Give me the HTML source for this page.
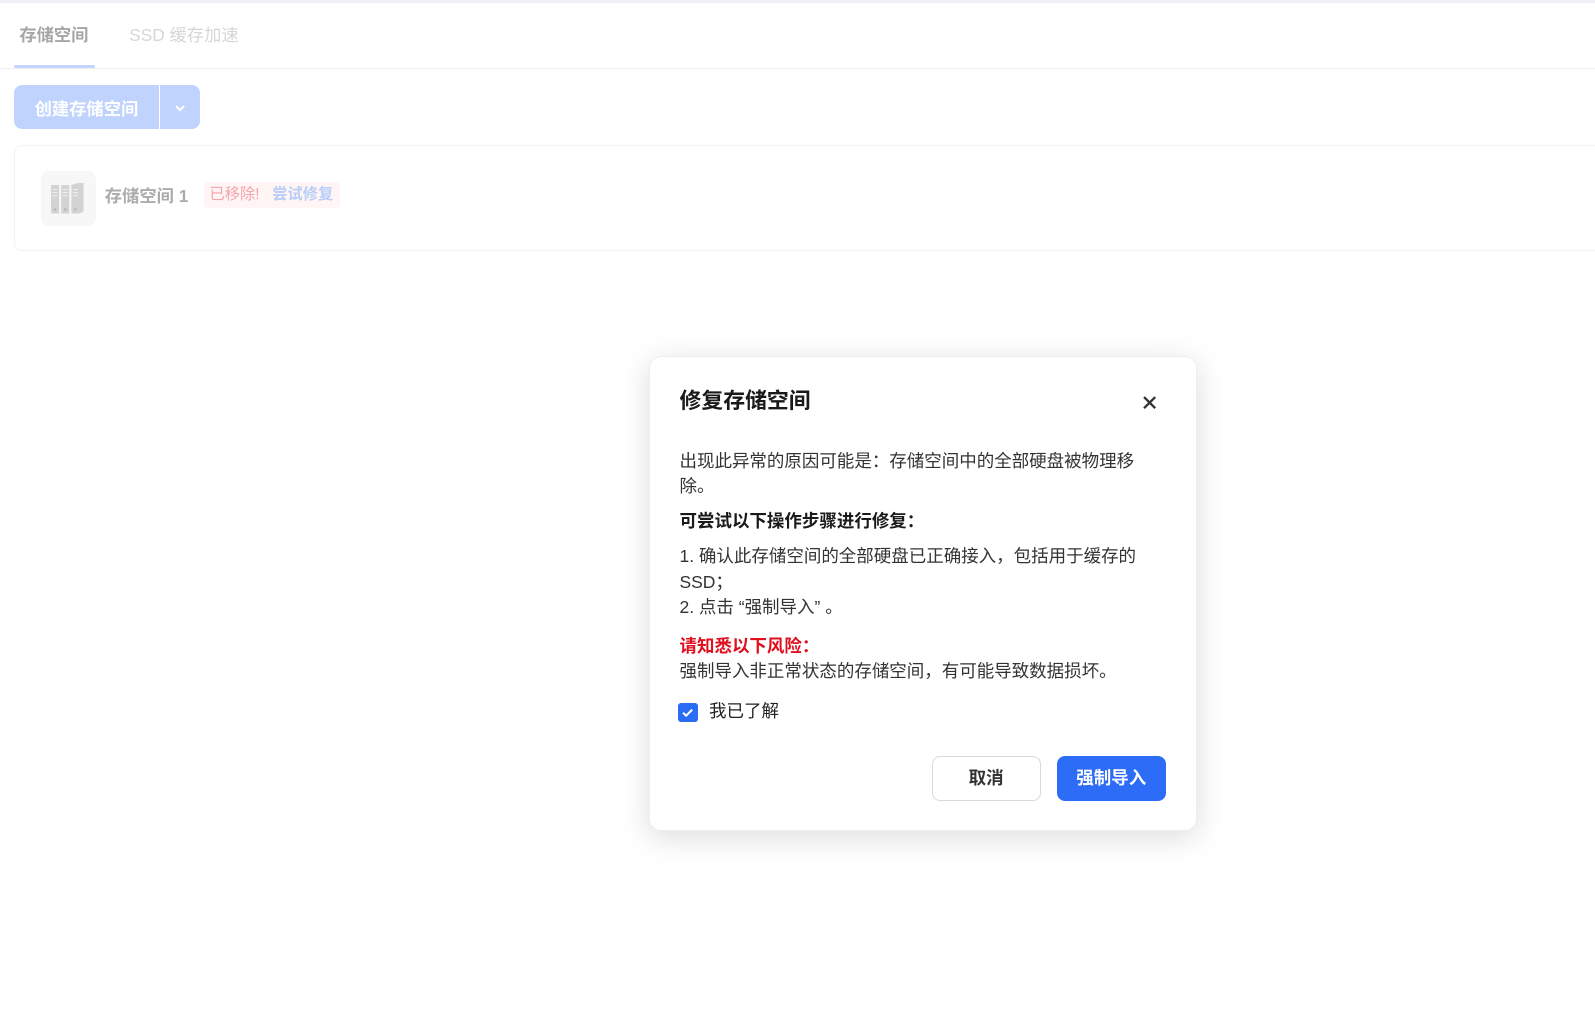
<!DOCTYPE html>
<html><head><meta charset="utf-8"><style>
*{box-sizing:border-box;margin:0;padding:0}
body{width:1595px;height:1015px;background:#fff;font-family:"Liberation Sans","Noto Sans CJK SC",sans-serif;position:relative;overflow:hidden}
#w{position:absolute;left:0;top:0;width:1568px;height:998px;zoom:1.0172}
.topbar{position:absolute;left:0;top:0;width:1568px;height:3px;background:#eef0f3}
.tabs{position:absolute;left:0;top:3px;width:1568px;height:65px;border-bottom:1px solid #eeeff1}
.tab1{position:absolute;left:19px;top:21px;font-size:17px;font-weight:bold;color:#a6a6a6}
.tab2{position:absolute;left:127px;top:21px;font-size:17px;color:#d6d6d6}
.ul{position:absolute;left:14px;top:64px;width:79px;height:3px;background:#c3d6fd;border-radius:2px}
.btn{position:absolute;left:14px;top:84px;width:183px;height:43px;background:#bfd3fd;border-radius:8px;color:#fff;font-weight:bold;font-size:17px}
.btn .t{position:absolute;left:20px;top:9px}
.btn .sep{position:absolute;left:142px;top:0;width:1px;height:43px;background:#fff}
.card{position:absolute;left:14px;top:143px;width:1580px;height:104px;border:1px solid #f3f3f3;border-radius:8px}
.ico{position:absolute;left:40px;top:168px;width:54px;height:54px;background:#f7f7f7;border-radius:8px}
.name{position:absolute;left:103px;top:179px;font-size:17px;font-weight:bold;color:#acacac}
.tag{position:absolute;left:201px;top:179px;height:25px;width:133px;background:#fff5f5;border-radius:4px;font-size:15px;line-height:25px;padding-left:5px}
.mask{position:absolute;left:638px;top:350px;width:539px;height:467px;background:#fff;border-radius:12px;box-shadow:0 6px 30px rgba(0,0,0,.14);border:1px solid #eee}
.m{position:absolute;left:668px;color:#333;font-size:17.2px;line-height:25px}
</style></head><body><div id="w">
<div class="topbar"></div>
<div class="tabs"></div>
<div class="tab1">存储空间</div><div class="tab2">SSD 缓存加速</div><div class="ul"></div>
<div class="btn"><span class="t">创建存储空间</span><span class="sep"></span>
<svg style="position:absolute;left:157px;top:17px" width="12" height="10" viewBox="0 0 12 10"><path d="M2 3l4 4 4-4" fill="none" stroke="#fff" stroke-width="2"/></svg></div>
<div class="card"></div>
<div class="ico"><svg style="position:absolute;left:9px;top:12px" width="36" height="32" viewBox="0 0 36 32"><g fill="#d3d3d3"><rect x="1" y="2" width="8" height="28"/><rect x="11" y="2" width="8" height="28"/><rect x="21" y="2" width="8" height="28"/><path d="M21 2l6-2h6v28l-4 2z"/></g><g fill="#f0f0f0"><rect x="2.5" y="6" width="5" height="1"/><rect x="2.5" y="9" width="5" height="1"/><rect x="2.5" y="12" width="5" height="1"/><rect x="12.5" y="6" width="5" height="1"/><rect x="12.5" y="9" width="5" height="1"/><rect x="12.5" y="12" width="5" height="1"/><rect x="22.5" y="6" width="5" height="1"/><rect x="22.5" y="9" width="5" height="1"/><rect x="22.5" y="12" width="5" height="1"/></g><g fill="#b8b8b8"><circle cx="5" cy="26" r="1.3"/><circle cx="15" cy="26" r="1.3"/><circle cx="25" cy="26" r="1.3"/></g></svg></div>
<div class="name">存储空间 1</div>
<div class="tag"><span style="color:#f4a4ac">已移除!</span>&nbsp;&nbsp;&nbsp;<span style="color:#b8cdf8;font-weight:bold">尝试修复</span></div>
<div class="mask"></div>
<div class="m" style="top:379px;font-size:21.5px;line-height:30px;font-weight:bold;color:#1a1a1a">修复存储空间</div>
<svg style="position:absolute;left:1123px;top:388px" width="15" height="15" viewBox="0 0 15 15"><path d="M2 2l11 11M13 2L2 13" stroke="#333" stroke-width="2.3"/></svg>
<div class="m" style="top:441px;width:455px">出现此异常的原因可能是：存储空间中的全部硬盘被物理移除。</div>
<div class="m" style="top:500px;font-weight:bold;color:#1a1a1a">可尝试以下操作步骤进行修复：</div>
<div class="m" style="top:535px;width:455px">1. 确认此存储空间的全部硬盘已正确接入，包括用于缓存的 SSD；<br>2. 点击 “强制导入” 。</div>
<div class="m" style="top:623px;font-weight:bold;color:#e0101f">请知悉以下风险：</div>
<div class="m" style="top:648px">强制导入非正常状态的存储空间，有可能导致数据损坏。</div>
<div style="position:absolute;left:667px;top:691px;width:19px;height:19px;background:#2b6cf5;border-radius:3px"><svg width="19" height="19" viewBox="0 0 19 19"><path d="M5 9.5l3 3 6-6" fill="none" stroke="#fff" stroke-width="2"/></svg></div>
<div class="m" style="left:697px;top:687px;color:#222">我已了解</div>
<div style="position:absolute;left:916px;top:743px;width:107px;height:44px;border:1px solid #d9d9d9;border-radius:8px;text-align:center;line-height:42px;font-size:17.2px;font-weight:bold;color:#333">取消</div>
<div style="position:absolute;left:1039px;top:743px;width:107px;height:44px;background:#2d6cf6;border-radius:8px;text-align:center;line-height:44px;font-size:17.2px;font-weight:bold;color:#fff">强制导入</div>
</div></body></html>
